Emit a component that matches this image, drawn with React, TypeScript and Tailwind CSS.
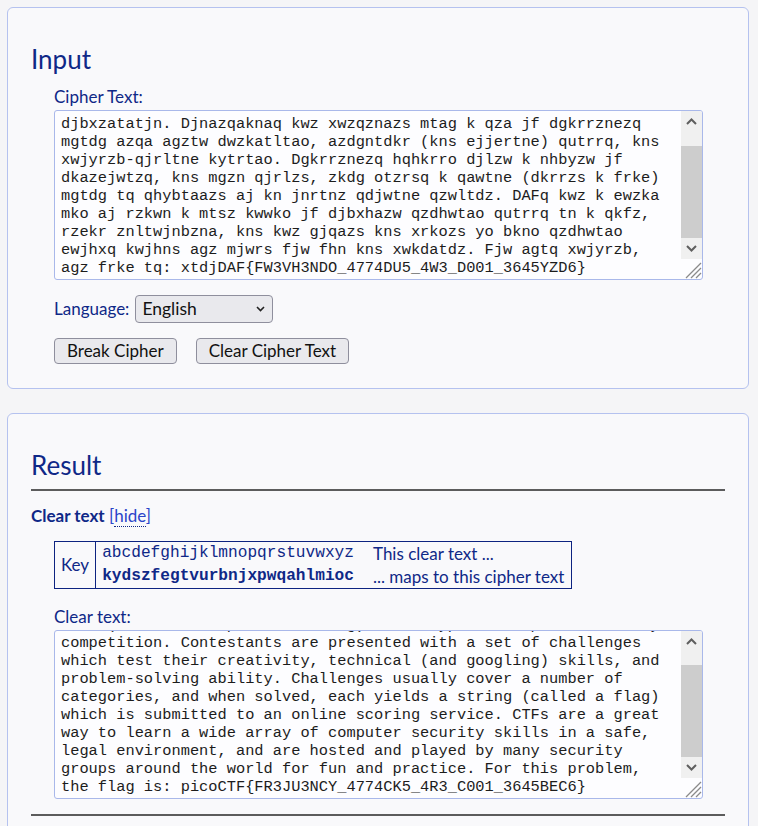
import React from "react";

const cipherLines = [
  "djbxzatatjn. Djnazqaknaq kwz xwzqznazs mtag k qza jf dgkrrznezq",
  "mgtdg azqa agztw dwzkatltao, azdgntdkr (kns ejjertne) qutrrq, kns",
  "xwjyrzb-qjrltne kytrtao. Dgkrrznezq hqhkrro djlzw k nhbyzw jf",
  "dkazejwtzq, kns mgzn qjrlzs, zkdg otzrsq k qawtne (dkrrzs k frke)",
  "mgtdg tq qhybtaazs aj kn jnrtnz qdjwtne qzwltdz. DAFq kwz k ewzka",
  "mko aj rzkwn k mtsz kwwko jf djbxhazw qzdhwtao qutrrq tn k qkfz,",
  "rzekr znltwjnbzna, kns kwz gjqazs kns xrkozs yo bkno qzdhwtao",
  "ewjhxq kwjhns agz mjwrs fjw fhn kns xwkdatdz. Fjw agtq xwjyrzb,",
  "agz frke tq: xtdjDAF{FW3VH3NDO_4774DU5_4W3_D001_3645YZD6}",
];

const clearLines = [
  "CTFs (short for capture the flag) are a type of computer security",
  "competition. Contestants are presented with a set of challenges",
  "which test their creativity, technical (and googling) skills, and",
  "problem-solving ability. Challenges usually cover a number of",
  "categories, and when solved, each yields a string (called a flag)",
  "which is submitted to an online scoring service. CTFs are a great",
  "way to learn a wide array of computer security skills in a safe,",
  "legal environment, and are hosted and played by many security",
  "groups around the world for fun and practice. For this problem,",
  "the flag is: picoCTF{FR3JU3NCY_4774CK5_4R3_C001_3645BEC6}",
];

function Chevron({ up }: { up?: boolean }) {
  return (
    <svg width="11" height="7" viewBox="0 0 11 7" fill="none">
      <path
        d={up ? "M1 6 L5.5 1.5 L10 6" : "M1 1 L5.5 5.5 L10 1"}
        stroke="#5f5f5f"
        strokeWidth="2"
      />
    </svg>
  );
}

function ScrollBox({ lines, height }: { lines: string[]; height: string }) {
  return (
    <div className={`flex w-[649px] overflow-hidden rounded-[3px] border border-[#a9b8ea] bg-[#fdfdff] ${height}`}>
      <div className="flex flex-1 flex-col justify-end overflow-hidden whitespace-pre pb-[2px] pl-[6px] font-['Liberation_Mono',monospace] text-[15.35px] leading-[18px] text-[#1c1c1c]">
        {lines.map((l, i) => (
          <div key={i}>{l}</div>
        ))}
      </div>
      <div className="flex w-[21px] flex-col">
        <div className="flex flex-1 flex-col bg-[#f0f0f0]">
          <div className="flex h-[20px] items-center justify-center">
            <Chevron up />
          </div>
          <div className="flex-1" />
          <div className="h-[92px] bg-[#cdcdcd]" />
          <div className="flex h-[21px] items-center justify-center">
            <Chevron />
          </div>
        </div>
        <div className="flex h-[20px] items-end justify-end">
          <svg width="20" height="20" viewBox="0 0 20 20">
            <path d="M19 4 L4 19 M19 9 L9 19 M19 14 L14 19" stroke="#8a8a8a" strokeWidth="1.3" />
          </svg>
        </div>
      </div>
    </div>
  );
}

export default function App() {
  return (
    <div className="min-h-screen bg-[#f5f5f7] pt-[7px] pb-10 font-['Lato',sans-serif] text-[17px] text-[#0f2887]">
      {/* Input panel */}
      <div className="ml-[7px] w-[742px] rounded-[6px] border border-[#b5c2ef] bg-[#f9f9fb] px-[23px] pt-[35px] pb-[24px]">
        <h2 className="text-[26px] leading-[32px] font-normal">Input</h2>
        <div className="ml-[23px] mt-[12px]">
          <div className="h-[20px] leading-[20px]">Cipher Text:</div>
          <div className="mt-[3px]">
            <ScrollBox lines={cipherLines} height="h-[170px]" />
          </div>
          <div className="mt-[15px] flex items-center gap-[6px]">
            <span>Language:</span>
            <div className="flex h-[28px] w-[138px] items-center justify-between rounded-[4px] border border-[#8f8f9d] bg-[#e9e9ed] pl-[6px] pr-[7px] text-[17.5px] text-[#111]">
              <span>English</span>
              <svg width="9" height="6" viewBox="0 0 9 6" fill="none">
                <path d="M1 1 L4.5 4.5 L8 1" stroke="#222" strokeWidth="1.6" />
              </svg>
            </div>
          </div>
          <div className="mt-[15px] flex gap-[19px]">
            <button className="h-[26px] rounded-[4px] border border-[#8f8f9d] bg-[#e9e9ed] px-[12px] leading-[24px] text-[#111]">
              Break Cipher
            </button>
            <button className="h-[26px] rounded-[4px] border border-[#8f8f9d] bg-[#e9e9ed] px-[12px] leading-[24px] text-[#111]">
              Clear Cipher Text
            </button>
          </div>
        </div>
      </div>

      {/* Result panel */}
      <div className="ml-[7px] mt-[24px] w-[742px] rounded-[6px] border border-[#b5c2ef] bg-[#f9f9fb] px-[23px] pt-[35px] pb-[40px]">
        <h2 className="text-[26px] leading-[32px] font-normal">Result</h2>
        <div className="mt-[8px] h-[2px] bg-[#5c5c5c]" />
        <div className="mt-[15px] h-[20px] leading-[20px]">
          <span className="font-bold">Clear text</span>{" "}
          <span className="text-[#2b44c9]">
            [<span className="border-b border-dotted border-[#0f2887]">hide</span>]
          </span>
        </div>
        <div className="ml-[23px] mt-[15px]">
          <table className="border-collapse border border-[#0d2380]">
            <tbody>
              <tr>
                <td rowSpan={2} className="border border-[#0d2380] px-[6px] align-middle">
                  Key
                </td>
                <td className="h-[23px] pl-[6px] pr-[19px] font-['Liberation_Mono',monospace] text-[16.15px] leading-[23px]">
                  abcdefghijklmnopqrstuvwxyz
                </td>
                <td className="pr-[7px] leading-[23px]">This clear text ...</td>
              </tr>
              <tr>
                <td className="h-[23px] pl-[6px] pr-[19px] font-['Liberation_Mono',monospace] text-[16.15px] font-bold leading-[23px]">
                  kydszfegtvurbnjxpwqahlmioc
                </td>
                <td className="pr-[7px] leading-[23px]">... maps to this cipher text</td>
              </tr>
            </tbody>
          </table>
          <div className="mt-[18px] h-[20px] leading-[20px]">Clear text:</div>
          <div className="mt-[3px]">
            <ScrollBox lines={clearLines} height="h-[169px]" />
          </div>
        </div>
        <div className="mt-[15px] h-[2px] bg-[#5c5c5c]" />
        <div className="h-[60px]" />
      </div>
    </div>
  );
}
